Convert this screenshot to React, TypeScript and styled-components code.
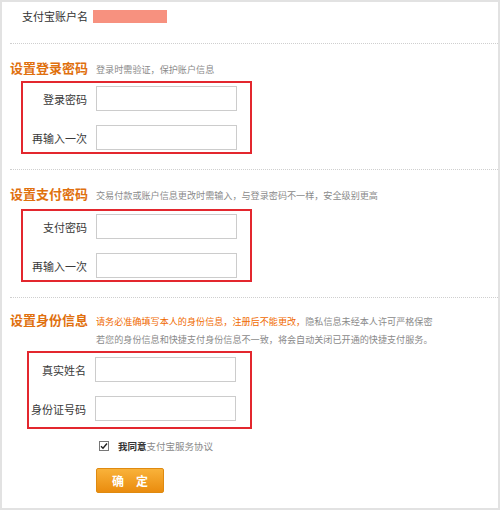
import styled, { createGlobalStyle } from "styled-components";

const GlobalStyle = createGlobalStyle`
  html, body {
    margin: 0;
    padding: 0;
    background: #ffffff;
  }
  body {
    font-family: "Noto Sans CJK SC", "Liberation Sans", sans-serif;
    color: #333333;
  }
`;

const Frame = styled.div`
  box-sizing: border-box;
  width: 500px;
  height: 510px;
  border: 2px solid #e2e2e2;
  background: #ffffff;
`;

const AccountRow = styled.div`
  display: flex;
  align-items: center;
  height: 28px;
  padding-left: 20px;
  gap: 5px;
  font-size: 11px;
  color: #333333;
`;

const Masked = styled.span`
  display: inline-block;
  width: 74px;
  height: 13px;
  background: #f7917f;
`;

const Divider = styled.div<{ $top: number }>`
  margin: ${(p) => p.$top}px 0 0 8px;
  border-top: 1px dotted #cfcfcf;
`;

const Section = styled.div<{ $top: number }>`
  padding: ${(p) => p.$top}px 8px 0 8px;
`;

const HeadRow = styled.div`
  display: flex;
  align-items: flex-start;
`;

const Heading = styled.h2`
  margin: 0;
  font-size: 13px;
  line-height: 18px;
  font-weight: bold;
  color: #e0700e;
  white-space: nowrap;
`;

const Notes = styled.div`
  margin-left: 8px;
  padding-top: 1px;
  display: flex;
  flex-direction: column;
`;

const Note = styled.p`
  margin: 0;
  font-size: 9.1px;
  line-height: 18px;
  color: #8a8a8a;
  white-space: nowrap;
`;

const Warn = styled.span`
  color: #f06a00;
`;

const RedBox = styled.div<{ $left: number; $top: number; $label: number; $pad: string }>`
  box-sizing: border-box;
  margin: ${(p) => p.$top}px 0 0 ${(p) => p.$left}px;
  width: ${(p) => 231 - (p.$left - 11)}px;
  border: 2px solid #e3272e;
  padding: ${(p) => p.$pad};
  display: grid;
  grid-template-columns: ${(p) => p.$label}px 141px;
  column-gap: 9px;
  row-gap: 14px;
  align-items: center;
`;

const Label = styled.label`
  text-align: right;
  font-size: 11px;
  color: #3a3a3a;
  white-space: nowrap;
`;

const Field = styled.input`
  box-sizing: border-box;
  width: 141px;
  height: 25px;
  margin: 0;
  border: 1px solid #cccccc;
  padding: 0 4px;
  background: #ffffff;
  outline: none;
`;

const AgreeRow = styled.div`
  display: flex;
  align-items: center;
  margin: 10px 0 0 89px;
  gap: 9px;
  font-size: 9.5px;
`;

const Check = styled.span`
  box-sizing: border-box;
  width: 10px;
  height: 10px;
  border: 1px solid #777777;
  display: flex;
  align-items: center;
  justify-content: center;
  background: #ffffff;
`;

const Agree = styled.b`
  color: #333333;
`;

const Link = styled.span`
  color: #8a8a8a;
`;

const Submit = styled.button`
  box-sizing: border-box;
  display: block;
  margin: 15px 0 0 86px;
  width: 68px;
  height: 25px;
  padding: 0;
  border: 1px solid #df8a10;
  border-radius: 2px;
  background: linear-gradient(#f9b23a, #ea8c0e);
  color: #ffffff;
  font-family: "Noto Sans CJK SC", sans-serif;
  font-size: 12px;
  font-weight: bold;
  line-height: 23px;
`;

type Row = { label: string };

function FieldBox({
  rows,
  left,
  top,
  label,
  pad = "3px 0 2px 0",
}: {
  rows: Row[];
  left: number;
  top: number;
  label: number;
  pad?: string;
}) {
  return (
    <RedBox $left={left} $top={top} $label={label} $pad={pad}>
      {rows.map((r) => (
        <>
          <Label key={r.label + "l"}>{r.label}</Label>
          <Field key={r.label + "f"} type="text" />
        </>
      ))}
    </RedBox>
  );
}

export default function App() {
  return (
    <>
      <GlobalStyle />
      <Frame>
        <AccountRow>
          <span>支付宝账户名</span>
          <Masked />
        </AccountRow>
        <Divider $top={13} />

        <Section $top={15}>
          <HeadRow>
            <Heading>设置登录密码</Heading>
            <Notes>
              <Note>登录时需验证，保护账户信息</Note>
            </Notes>
          </HeadRow>
          <FieldBox
            left={11}
            top={3}
            label={64}
            rows={[{ label: "登录密码" }, { label: "再输入一次" }]}
          />
        </Section>
        <Divider $top={15} />

        <Section $top={15}>
          <HeadRow>
            <Heading>设置支付密码</Heading>
            <Notes>
              <Note>交易付款或账户信息更改时需输入，与登录密码不一样，安全级别更高</Note>
            </Notes>
          </HeadRow>
          <FieldBox
            left={11}
            top={5}
            label={64}
            rows={[{ label: "支付密码" }, { label: "再输入一次" }]}
          />
        </Section>
        <Divider $top={15} />

        <Section $top={13}>
          <HeadRow>
            <Heading>设置身份信息</Heading>
            <Notes>
              <Note>
                <Warn>请务必准确填写本人的身份信息，注册后不能更改，</Warn>
                隐私信息未经本人许可严格保密
              </Note>
              <Note>若您的身份信息和快捷支付身份信息不一致，将会自动关闭已开通的快捷支付服务。</Note>
            </Notes>
          </HeadRow>
          <FieldBox
            left={17}
            top={3}
            label={57}
            pad="4px 0 6px 0"
            rows={[{ label: "真实姓名" }, { label: "身份证号码" }]}
          />
          <AgreeRow>
            <Check>
              <svg width="8" height="8" viewBox="0 0 8 8">
                <path d="M1 4.2 L3 6.2 L7 1.5" fill="none" stroke="#222" strokeWidth="1.4" />
              </svg>
            </Check>
            <span>
              <Agree>我同意</Agree>
              <Link>支付宝服务协议</Link>
            </span>
          </AgreeRow>
          <Submit type="button">确　定</Submit>
        </Section>
      </Frame>
    </>
  );
}
